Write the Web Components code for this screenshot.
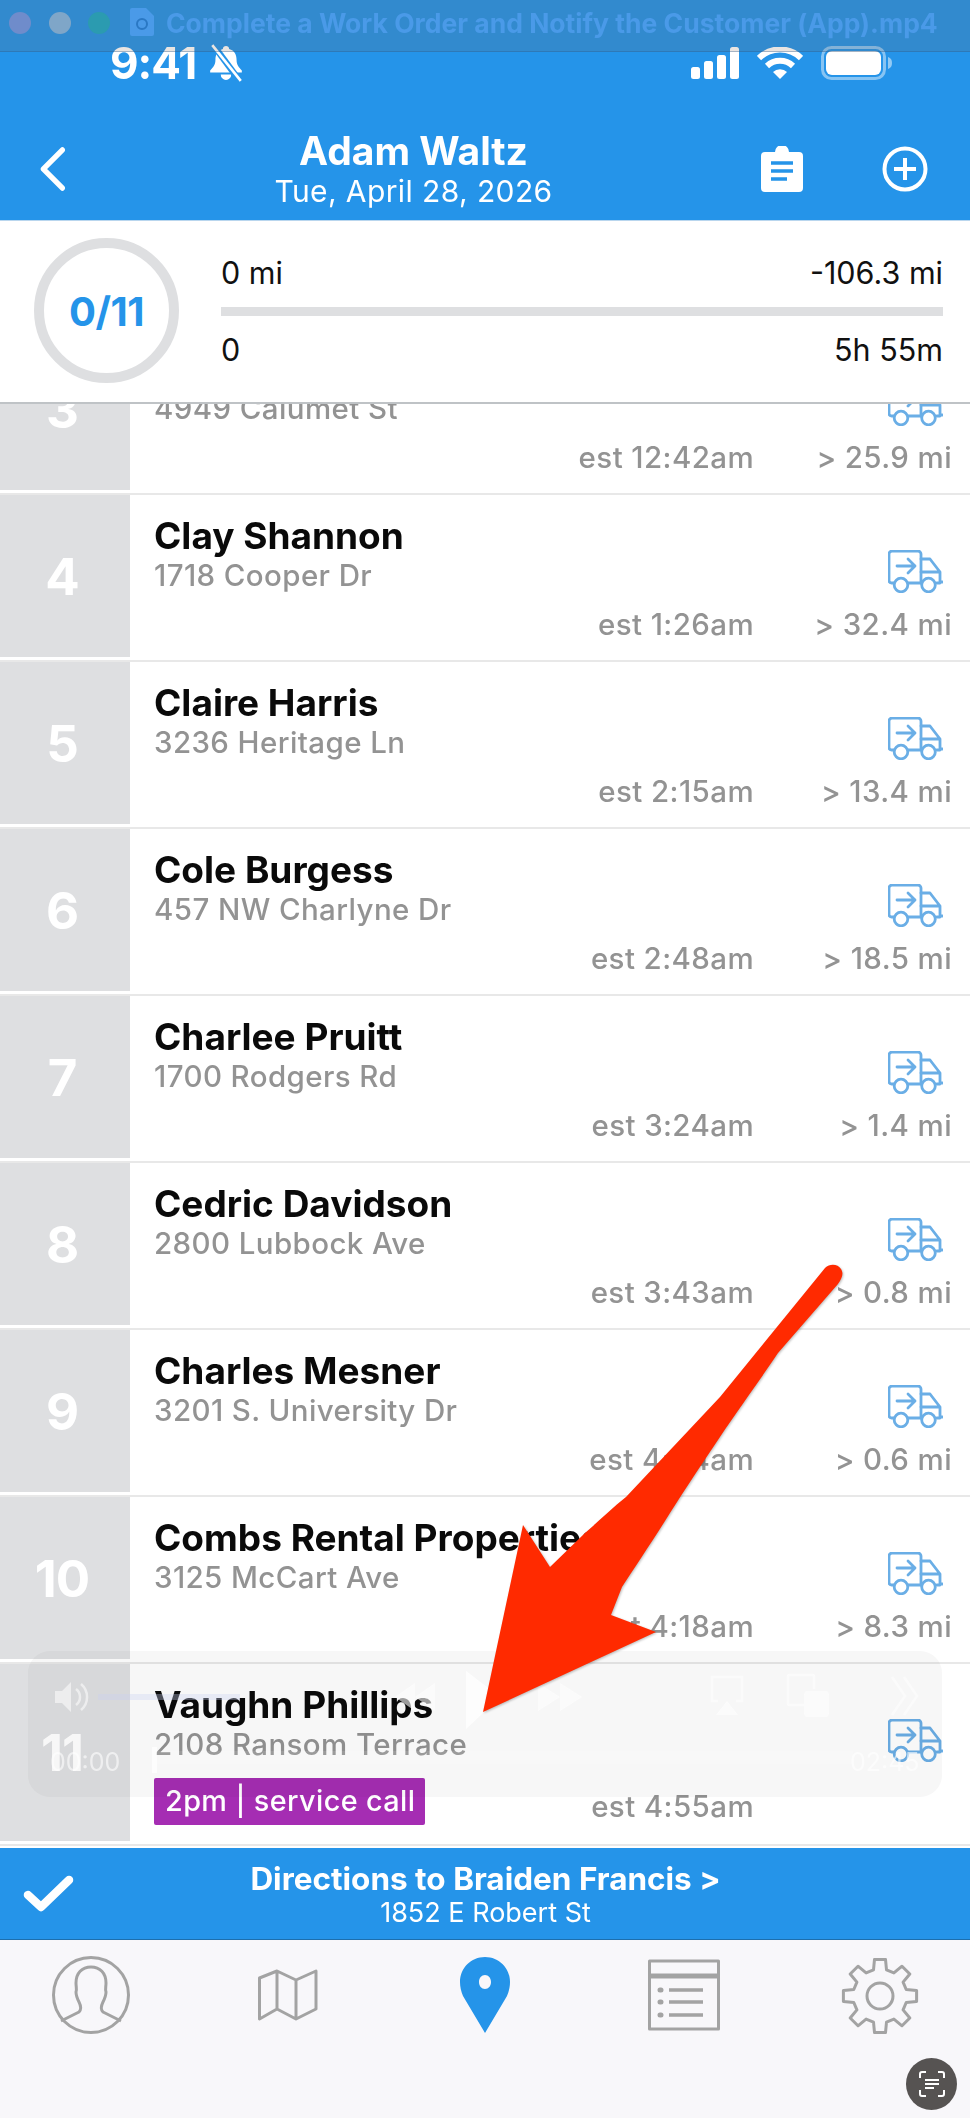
<!DOCTYPE html>
<html>
<head>
<meta charset="utf-8">
<style>
  html, body { margin: 0; padding: 0; }
  body { width: 970px; height: 2118px; overflow: hidden; position: relative; background: #f8f7fa; font-family: Inter, "Liberation Sans", sans-serif; }
  #screen { display: flex; flex-direction: column; height: 2118px; }
</style>
</head>
<body>
<div id="screen">
  <app-header name="Adam Waltz" date="Tue, April 28, 2026"></app-header>
  <route-summary done="0/11" miles="0 mi" left="-106.3 mi" count="0" time="5h 55m"></route-summary>
  <stop-list>
    <stop-row num="3" addr="4949 Calumet St" est="est 12:42am" dist="&gt; 25.9 mi" style="margin-top:-76px"></stop-row>
    <stop-row num="4" name="Clay Shannon" addr="1718 Cooper Dr" est="est 1:26am" dist="&gt; 32.4 mi"></stop-row>
    <stop-row num="5" name="Claire Harris" addr="3236 Heritage Ln" est="est 2:15am" dist="&gt; 13.4 mi"></stop-row>
    <stop-row num="6" name="Cole Burgess" addr="457 NW Charlyne Dr" est="est 2:48am" dist="&gt; 18.5 mi"></stop-row>
    <stop-row num="7" name="Charlee Pruitt" addr="1700 Rodgers Rd" est="est 3:24am" dist="&gt; 1.4 mi"></stop-row>
    <stop-row num="8" name="Cedric Davidson" addr="2800 Lubbock Ave" est="est 3:43am" dist="&gt; 0.8 mi"></stop-row>
    <stop-row num="9" name="Charles Mesner" addr="3201 S. University Dr" est="est 4:04am" dist="&gt; 0.6 mi"></stop-row>
    <stop-row num="10" name="Combs Rental Properties" addr="3125 McCart Ave" est="est 4:18am" dist="&gt; 8.3 mi"></stop-row>
    <stop-row num="11" name="Vaughn Phillips" addr="2108 Ransom Terrace" est="est 4:55am" tall><span slot="tag">2pm | service call</span></stop-row>
  </stop-list>
  <directions-bar heading="Directions to Braiden Francis &gt;" addr="1852 E Robert St"></directions-bar>
  <tab-bar></tab-bar>
</div>
<window-title text="Complete a Work Order and Notify the Customer (App).mp4"></window-title>
<video-controls></video-controls>
<red-arrow></red-arrow>
<scan-button></scan-button>

<script>
// constant
const font = 'Inter, "Liberation Sans", sans-serif';

function el(name, cls) {
  customElements.get(name) || customElements.define(name, cls);
}

class WindowTitle extends HTMLElement {
  connectedCallback() {
    this.attachShadow({ mode: 'open' }).innerHTML = `
    <style>
      :host { position: absolute; left: 0; top: 0; width: 970px; height: 52px; display: block;
        background: rgba(120,90,70,.16); border-bottom: 1px solid rgba(40,90,140,.35); box-sizing: border-box; font-family: ${font}; }
      i { position: absolute; top: 12px; width: 22px; height: 22px; border-radius: 50%; }
      svg { position: absolute; left: 130px; top: 8px; }
      span { position: absolute; left: 166px; top: 7px; font-size: 26.500px; line-height: 32px; font-weight: 700; color: #4a9ae8; white-space: nowrap; }
    </style>
    <i style="left:9px;background:#6f8ccb"></i>
    <i style="left:49px;background:#7fa6c8"></i>
    <i style="left:88px;background:#2b9bb0"></i>
    <svg width="24" height="28" viewBox="0 0 24 28"><path d="M2 0H16L24 8V26a2 2 0 0 1-2 2H2a2 2 0 0 1-2-2V2a2 2 0 0 1 2-2Z" fill="#4a9ae8"/><circle cx="12" cy="16" r="5" fill="none" stroke="#2a78c4" stroke-width="2"/></svg>
    <span>${this.getAttribute('text')}</span>`;
  }
}
el('window-title', WindowTitle);

class AppHeader extends HTMLElement {
  connectedCallback() {
    this.attachShadow({ mode: 'open' }).innerHTML = `
    <style>
      :host { display: block; height: 221px; flex: none; background: #2594e9; color: #fff; font-family: ${font}; box-sizing: border-box; border-bottom: 1px solid #b9d6ee; }
      .status { height: 36px; padding-top: 45px; display: flex; align-items: center; }
      .time { margin-left: 110px; width: 92px; font-size: 44px; font-weight: 700; line-height: 36px; letter-spacing: -1px; white-space: nowrap; }
      .bell { margin-left: 6px; }
      .sig { margin-left: 447px; }
      .wifi { margin-left: 16px; }
      .bat { margin-left: 18px; }
      .nav { display: flex; align-items: center; padding: 48px 0 0 40px; }
      .title { width: 695px; text-align: center; }
      .name { font-size: 39px; line-height: 44px; font-weight: 700; }
      .date { font-size: 30px; line-height: 36px; letter-spacing: .4px; }
      .plus { margin-left: 79px; }
    </style>
    <div class="status">
      <span class="time">9:41</span>
      <svg class="bell" width="36" height="38" viewBox="0 0 34 36"><path d="M17 2c1.600 0 3 1.200 3 2.800 5 1.400 7 5.400 7 10.200 0 5 2 7 5 10v2H2v-2c3-3 5-5 5-10 0-4.800 2-8.800 7-10.200C14 3.200 15.400 2 17 2ZM12 29h10a5 5 0 0 1-10 0Z" fill="#fff"/><path d="M5 1 30 35" stroke="#2594e9" stroke-width="6"/><path d="M4 1 31 35" stroke="#fff" stroke-width="2.500"/></svg>
      <svg class="sig" width="50" height="32" viewBox="0 0 50 32" fill="#fff"><rect x="0" y="20" width="9" height="12" rx="2.500"/><rect x="13" y="14" width="9" height="18" rx="2.500"/><rect x="26" y="8" width="9" height="24" rx="2.500"/><rect x="39" y="0" width="9" height="32" rx="2.500"/></svg>
      <svg class="wifi" width="46" height="32" viewBox="0 0 46 32" fill="none" stroke="#fff"><path d="M2 11a30 30 0 0 1 42 0" stroke-width="6"/><path d="M10 19a19 19 0 0 1 26 0" stroke-width="6"/><path d="M16 25l7 7 7-7a10 10 0 0 0-14 0Z" fill="#fff" stroke="none"/></svg>
      <svg class="bat" width="72" height="34" viewBox="0 0 72 34"><rect x="1.500" y="1.500" width="62" height="31" rx="9" fill="none" stroke="rgba(255,255,255,.45)" stroke-width="3"/><rect x="5" y="5" width="55" height="24" rx="6" fill="#fff"/><path d="M67 11c3 1 4 3 4 6s-1 5-4 6Z" fill="rgba(255,255,255,.5)"/></svg>
    </div>
    <div class="nav">
      <svg width="26" height="44" viewBox="0 0 26 44" fill="none" stroke="#fff" stroke-width="5.500" stroke-linecap="round" stroke-linejoin="round"><path d="M23 3 3 22l20 19" transform="matrix(.95 0 0 1 .5 0)"/></svg>
      <div class="title"><div class="name">${this.getAttribute('name')}</div><div class="date">${this.getAttribute('date')}</div></div>
      <svg width="42" height="46" viewBox="0 0 42 46"><path d="M4 6h10a7 7 0 0 1 14 0h10a4 4 0 0 1 4 4v32a4 4 0 0 1-4 4H4a4 4 0 0 1-4-4V10a4 4 0 0 1 4-4Z" fill="#fff"/><path d="M10 17h22M10 25h22M10 33h16" stroke="#2594e9" stroke-width="3.500"/></svg>
      <svg class="plus" width="46" height="46" viewBox="0 0 46 46" fill="none" stroke="#fff" stroke-width="4"><circle cx="23" cy="23" r="20.500"/><path d="M23 12v22M12 23h22"/></svg>
    </div>`;
  }
}
el('app-header', AppHeader);

class RouteSummary extends HTMLElement {
  connectedCallback() {
    const a = n => this.getAttribute(n);
    this.attachShadow({ mode: 'open' }).innerHTML = `
    <style>
      :host { display: flex; height: 183px; flex: none; box-sizing: border-box; background: #fff; border-bottom: 2px solid #bfc3c6; position: relative; z-index: 2; font-family: ${font}; color: #111; }
      .ring { width: 145px; height: 145px; box-sizing: border-box; margin: 17px 0 0 34px; border: 10px solid #dedfe1; border-radius: 50%; display: flex; align-items: center; justify-content: center; color: #2594e9; font-size: 40px; font-weight: 700; letter-spacing: -.5px; padding-top: 2px; }
      .info { margin: 34px 0 0 42px; width: 722px; font-size: 30.500px; line-height: 36px; }
      .line { display: flex; justify-content: space-between; }
      .bar { height: 9px; background: #dedfe1; margin: 16px 0 16px; }
    </style>
    <div class="ring">${a('done')}</div>
    <div class="info">
      <div class="line"><span>${a('miles')}</span><span>${a('left')}</span></div>
      <div class="bar"></div>
      <div class="line"><span>${a('count')}</span><span>${a('time')}</span></div>
    </div>`;
  }
}
el('route-summary', RouteSummary);

class StopList extends HTMLElement {
  connectedCallback() {
    this.attachShadow({ mode: 'open' }).innerHTML = `
    <style>:host { display: block; height: 1444px; flex: none; overflow: hidden; background: #fff; }</style><slot></slot>`;
  }
}
el('stop-list', StopList);

const truck = `<svg width="55" height="43" viewBox="0 0 55 43" fill="none" stroke="#6aaee6" stroke-width="2.800" stroke-linecap="round" stroke-linejoin="round">
  <path d="M5.500 33H3.500a2.500 2.500 0 0 1-2.500-2.500V4a3 3 0 0 1 3-3h26a3 3 0 0 1 3 3v29"/>
  <path d="M20.500 33H32M33 9h9l10 13v11h-3M33 22h19M32 33h1M53 32h1.500"/>
  <path d="M9 16h18M20 9l7 7-7 7"/>
  <circle cx="13" cy="35" r="6.800"/><circle cx="40.500" cy="35" r="6.800"/></svg>`;

class StopRow extends HTMLElement {
  connectedCallback() {
    const a = n => this.getAttribute(n) || '';
    this.attachShadow({ mode: 'open' }).innerHTML = `
    <style>
      :host { display: flex; height: 167px; box-sizing: border-box; border-bottom: 2px solid #e8e8e8; padding-bottom: 3px; background: #fff; font-family: ${font}; }
      :host([tall]) { height: 182px; }
      .num { width: 130px; flex: none; box-sizing: border-box; padding-right: 6px; background: #dedfe1; color: #fff; font-size: 51px; font-weight: 700; display: flex; align-items: center; justify-content: center; letter-spacing: -1px; }
      .body { flex: 1; display: flex; flex-direction: column; padding: 0 18px 0 24px; min-width: 0; }
      .top { display: flex; justify-content: space-between; padding-top: 19px; }
      .name { font-size: 37px; line-height: 44px; height: 44px; font-weight: 700; color: #0a0a0a; white-space: nowrap; }
      .addr { font-size: 29.500px; line-height: 34px; color: #939393; letter-spacing: .4px; font-weight: 500; }
      .truck { margin: 36px 9px 0 0; height: 43px; flex: none; }
      .foot { margin-top: auto; display: flex; align-items: flex-end; color: #939393; font-size: 29.500px; line-height: 34px; padding-bottom: 16px; letter-spacing: .4px; font-weight: 500; white-space: nowrap; }
      :host([tall]) .foot { padding-bottom: 18px; }
      .tag { margin-right: auto; }
      .dist { width: 198px; text-align: right; flex: none; min-height: 34px; }
      ::slotted([slot=tag]) { display: block; background: #a52db3; color: #fff; height: 47px; line-height: 46px; padding: 0 11px; border-radius: 2px; font-size: 28.800px; box-sizing: border-box; width: 271px; margin-bottom: -2px; white-space: nowrap; }
    </style>
    <div class="num">${a('num')}</div>
    <div class="body">
      <div class="top">
        <div><div class="name">${a('name')}</div><div class="addr">${a('addr')}</div></div>
        <div class="truck">${truck}</div>
      </div>
      <div class="foot"><div class="tag"><slot name="tag"></slot></div><span>${a('est')}</span><span class="dist">${a('dist')}</span></div>
    </div>`;
  }
}
el('stop-row', StopRow);

class DirectionsBar extends HTMLElement {
  connectedCallback() {
    this.attachShadow({ mode: 'open' }).innerHTML = `
    <style>
      :host { display: flex; height: 92px; flex: none; box-sizing: border-box; background: #2594e9; color: #fff; border-bottom: 1px solid #1d6fae; font-family: ${font}; align-items: center; position: relative; }
      svg { margin-left: 23px; flex: none; }
      .txt { width: 869px; text-align: center; padding-top: 1px; margin-left: -23px; }
      .t { font-size: 31.500px; line-height: 36px; font-weight: 700; }
      .a { font-size: 27px; line-height: 31px; }
    </style>
    <svg width="51" height="37" viewBox="0 0 51 37" fill="none" stroke="#fff" stroke-width="8.500" stroke-linecap="round" stroke-linejoin="round"><path d="M5 20 18 32 46 5"/></svg>
    <div class="txt"><div class="t">${this.getAttribute('heading')}</div><div class="a">${this.getAttribute('addr')}</div></div>`;
  }
}
el('directions-bar', DirectionsBar);

// gear outline: 8 teeth around a centre
function gearPath(cx, cy, ro, ri, n) {
  let d = '';
  const step = Math.PI * 2 / n;
  for (let i = 0; i < n; i++) {
    const t = i * step - Math.PI / 2;
    const pts = [[ri, t - step * .31], [ro, t - step * .19], [ro, t + step * .19], [ri, t + step * .31]];
    pts.forEach((p, j) => {
      d += (i === 0 && j === 0 ? 'M' : 'L') + (cx + p[0] * Math.cos(p[1])).toFixed(1) + ' ' + (cy + p[0] * Math.sin(p[1])).toFixed(1);
    });
  }
  return d + 'Z';
}

class TabBar extends HTMLElement {
  connectedCallback() {
    this.attachShadow({ mode: 'open' }).innerHTML = `
    <style>
      :host { display: block; flex: 1; background: #f8f7fa; }
      .row { display: flex; align-items: flex-start; padding: 16px 0 0 52px; }
      svg { flex: none; display: block; fill: none; stroke: #a3a3a3; stroke-width: 3; stroke-linejoin: round; }
    </style>
    <div class="row">
      <svg width="78" height="78" viewBox="0 0 78 78"><ellipse cx="39" cy="39" rx="37.500" ry="37.500"/><path d="M9 65l18-9c2-2 2-6 0-10-2-4-3-6-3-10 1-3 0-5 0-9 0-10 6-16 15-16s15 6 15 16c0 4-1 6 0 9 0 4-1 6-3 10-2 4-2 8 0 10l18 9"/></svg>
      <svg style="margin:13px 0 0 128px" width="60" height="52" viewBox="0 0 60 52"><path d="M1.500 9 19 2l19 9 20-9v38l-20 10-19-10L1.500 50ZM19 2v37M38 11v38"/></svg>
      <svg style="margin:1px 0 0 142px;stroke:none" width="50" height="76" viewBox="0 0 50 76"><path fill-rule="evenodd" d="M25 0c14 0 25 11 25 25 0 5-1 9-3 14L25 76 3 39C1 34 0 30 0 25 0 11 11 0 25 0Zm0 18c-3.500 0-6 3-6 7s2.500 7 6 7 6-3 6-7-2.500-7-6-7Z" fill="#2594e9"/></svg>
      <svg style="margin:3px 0 0 138px" width="72" height="72" viewBox="0 0 72 72"><rect x="1.500" y="2" width="69" height="68"/><path d="M1.500 16h69" /><path d="M1.500 18h69"/><path d="M21 31h34M21 43h34M21 56h34" stroke-width="3.500"/><path d="M12 31h1M12 43h1M12 56h1" stroke-width="5" stroke-linecap="round"/></svg>
      <svg style="margin:2px 0 0 121px" width="78" height="76" viewBox="0 0 78 76"><path d="${gearPath(39, 38, 37, 27, 8)}"/><circle cx="39" cy="38" r="13"/></svg>
    </div>`;
  }
}
el('tab-bar', TabBar);

class VideoControls extends HTMLElement {
  connectedCallback() {
    this.attachShadow({ mode: 'open' }).innerHTML = `
    <style>
      :host { position: absolute; left: 28px; top: 1651px; width: 914px; height: 146px; display: block; font-family: ${font}; color: rgba(255,255,255,.6); font-size: 25px; }
      /* multiply keeps the row text dark under the panel */
      .bg { position: absolute; inset: 0; border-radius: 22px; background: #f7f7f7; mix-blend-mode: multiply; }
      svg { position: absolute; }
      .t { position: absolute; top: 96px; }
      .vol { position: absolute; left: 70px; top: 43px; width: 142px; height: 6px; background: rgba(200,210,240,.35); }
      .bar { position: absolute; left: 125px; top: 100px; width: 700px; height: 13px; background: rgba(255,255,255,.12); }
      .head { position: absolute; left: 124px; top: 96px; width: 5px; height: 26px; background: rgba(255,255,255,.75); }
    </style>
    <div class="bg"></div>
    <svg style="left:25px;top:28px" width="36" height="36" viewBox="0 0 36 36" fill="#fff" opacity=".55"><path d="M2 12h7l9-9v30l-9-9H2Z"/><path d="M23 10a10 10 0 0 1 0 16M28 5a17 17 0 0 1 0 26" fill="none" stroke="#fff" stroke-width="2.500"/></svg>
    <div class="vol"></div>
    <svg style="left:367px;top:26px" width="40" height="40" viewBox="0 0 40 40" fill="#fff" opacity=".6"><path d="M20 6v28L0 20ZM40 6v28L20 20Z"/></svg>
    <svg style="left:436px;top:20px" width="40" height="58" viewBox="0 0 40 58" fill="#fff" opacity=".85"><path d="M2 0 36 26 2 58Z"/></svg>
    <svg style="left:510px;top:26px" width="44" height="40" viewBox="0 0 44 40" fill="#fff" opacity=".6"><path d="M0 6v28l22-14ZM22 6v28l22-14Z"/></svg>
    <svg style="left:682px;top:24px" width="34" height="44" viewBox="0 0 34 44" fill="none" stroke="#fff" stroke-width="2.500" opacity=".6"><path d="M8 26H2V2h30v24h-6"/><path d="M17 26l11 14H6Z" fill="#fff" stroke="none"/></svg>
    <svg style="left:758px;top:22px" width="44" height="44" viewBox="0 0 44 44" fill="none" stroke="#fff" stroke-width="2.500" opacity=".6"><path d="M18 32H4a2 2 0 0 1-2-2V4a2 2 0 0 1 2-2h22a2 2 0 0 1 2 2v12"/><rect x="18" y="18" width="25" height="26" rx="4" fill="#fff" stroke="none"/></svg>
    <svg style="left:862px;top:24px" width="30" height="42" viewBox="0 0 30 42" fill="none" stroke="#fff" stroke-width="2.500" opacity=".5"><path d="M2 2l13 19L2 40M14 2l13 19-13 19"/></svg>
    <div class="bar"></div>
    <div class="head"></div>
    <span class="t" style="left:22px">00:00</span>
    <span class="t" style="left:822px">02:45</span>`;
  }
}
el('video-controls', VideoControls);

class RedArrow extends HTMLElement {
  connectedCallback() {
    this.attachShadow({ mode: 'open' }).innerHTML = `
    <style>
      :host { position: absolute; left: 470px; top: 1260px; display: block; width: 380px; height: 460px; }
      svg { display: block; filter: drop-shadow(1px 1px 1px rgba(0,0,0,.25)); }
    </style>
    <svg width="380" height="460" viewBox="470 1260 380 460"><path d="M825 1268C830 1263 838 1264 841 1269 844 1274 842 1278 838 1284L778 1353C760 1380 738 1410 720 1437 703 1462 686 1488 670 1513 650 1545 633 1570 622 1587L611 1615 656 1632 483 1712 523 1525 550 1567 585 1533C600 1520 612 1508 626 1497L720 1397Z" fill="#ff2a00"/></svg>`;
  }
}
el('red-arrow', RedArrow);

class ScanButton extends HTMLElement {
  connectedCallback() {
    this.attachShadow({ mode: 'open' }).innerHTML = `
    <style>
      :host { position: absolute; left: 906px; top: 2058px; width: 51px; height: 52px; border-radius: 50%; background: #565352; display: flex; align-items: center; justify-content: center; }
    </style>
    <svg width="28" height="28" viewBox="0 0 28 28" fill="none" stroke="#fff" stroke-width="2"><path d="M8 2H4a2 2 0 0 0-2 2v4M20 2h4a2 2 0 0 1 2 2v4M8 26H4a2 2 0 0 1-2-2v-4M20 26h4a2 2 0 0 0 2-2v-4M7 10h14M7 14h14M7 18h9"/></svg>`;
  }
}
el('scan-button', ScanButton);
</script>
</body>
</html>
